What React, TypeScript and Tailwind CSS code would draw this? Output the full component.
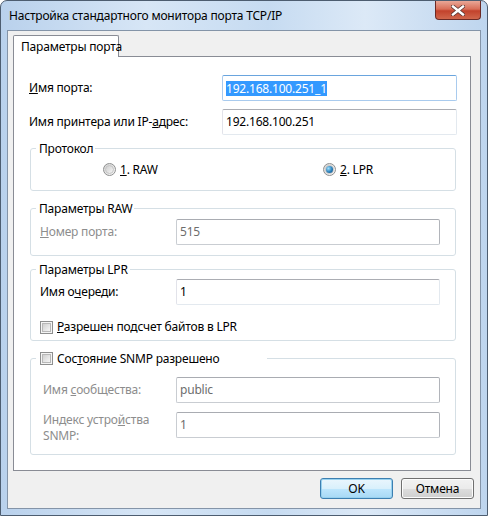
import React from "react";

const font = { fontFamily: '"Noto Sans", "Open Sans", sans-serif', letterSpacing: "-0.2px" };

function Radio({ checked }: { checked?: boolean }) {
  return (
    <span className="relative inline-flex h-[13px] w-[13px] shrink-0 items-center justify-center rounded-full border border-[#8e8f8f] bg-[linear-gradient(135deg,#d4d4d4,#f8f8f8)]">
      <span className="h-[9px] w-[9px] rounded-full bg-[linear-gradient(135deg,#cfcfcf,#f4f4f4)] border border-[#c4c4c4] flex items-center justify-center">
        {checked && (
          <span className="h-[7px] w-[7px] rounded-full bg-[radial-gradient(circle_at_35%_35%,#9fe0ff,#2a7fb8_55%,#0f4e86)]" />
        )}
      </span>
    </span>
  );
}

function Check() {
  return (
    <span className="inline-flex h-[13px] w-[13px] shrink-0 items-center justify-center border border-[#8e8f8f] bg-[#f4f4f4]">
      <span className="h-[9px] w-[9px] border border-[#b8b8b8] bg-[linear-gradient(135deg,#d0d0d0,#f6f6f6)]" />
    </span>
  );
}

function Input({
  value,
  w,
  disabled,
  selected,
  focus,
}: {
  value: string;
  w: string;
  disabled?: boolean;
  selected?: boolean;
  focus?: boolean;
}) {
  return (
    <div
      className={`${w} h-[26px] flex items-center pl-[3px] bg-white rounded-[2px] border ${
        focus
          ? "border-[#a9cbee] border-t-[#6aa5de]"
          : disabled
          ? "border-[#c9cdd2] border-t-[#a9acb2] border-r-[#b1b4ba]"
          : "border-[#e3e9ef] border-t-[#abadb3] border-l-[#e2e3ea]"
      }`}
    >
      {selected ? (
        <span className="bg-[#3399ff] text-white leading-[15px]">{value}</span>
      ) : (
        <span className={disabled ? "text-[#6d6d6d]" : "text-black"}>{value}</span>
      )}
    </div>
  );
}

function Group({
  legend,
  h,
  legendW,
  children,
}: {
  legend: React.ReactNode;
  h: string;
  legendW?: string;
  children: React.ReactNode;
}) {
  return (
    <div className={`relative ml-[16px] mr-[14px] ${h} rounded-[3px] border border-[#d5dfe5]`}>
      <div className={`absolute left-[5px] -top-[9px] h-[17px] flex items-center bg-white pl-[3px] pr-[2px] whitespace-nowrap ${legendW ?? ""}`}>
        {legend}
      </div>
      {children}
    </div>
  );
}

export default function App() {
  return (
    <div
      style={font}
      className="w-[488px] h-[516px] text-[12px] text-black rounded-t-[7px] border border-[#4d5d70] bg-[linear-gradient(90deg,#b9d1ec_0%,#d7e6f6_30%,#c6dbf1_55%,#dce9f7_75%,#bed5ee_100%)] flex flex-col overflow-hidden"
    >
      {/* Title bar */}
      <div className="h-[29px] flex items-start justify-between">
        <div className="pl-[8px] pt-[6px] text-[12px] text-black whitespace-nowrap">
          Настройка стандартного монитора порта TCP/IP
        </div>
        <div className="mr-[6px] h-[19px] w-[46px] rounded-b-[4px] border border-t-0 border-[#6b2a25] bg-[linear-gradient(180deg,#e9a797_0%,#d86e58_45%,#c2422c_55%,#d0674c_100%)] flex items-center justify-center">
          <svg width="14" height="11" viewBox="0 0 14 11">
            <path d="M2 1.5 L12 9.5 M12 1.5 L2 9.5" stroke="#5b3632" strokeWidth="4" strokeLinecap="square" />
            <path d="M2 1.5 L12 9.5 M12 1.5 L2 9.5" stroke="#ffffff" strokeWidth="2.4" strokeLinecap="square" />
          </svg>
        </div>
      </div>

      {/* Client area */}
      <div className="mx-[6px] mb-[6px] flex-1 border border-[#8494a8] bg-[#f0f0f0] flex flex-col">
        <div className="pl-[5px] pt-[4px]">
          {/* Tab header */}
          <div className="relative z-10 w-[106px] h-[22px] bg-white border border-b-0 border-[#898c95] rounded-t-[2px] flex items-center pl-[7px] whitespace-nowrap">
            Параметры порта
          </div>
          {/* Tab panel */}
          <div className="-mt-[1px] w-[458px] h-[415px] bg-white border border-[#898c95] pt-[18px]">
            <div className="flex items-center">
              <div className="pl-[15px] w-[208px] whitespace-nowrap">
                <u>И</u>мя порта:
              </div>
              <Input value="192.168.100.251_1" w="w-[235px]" selected focus />
            </div>
            <div className="flex items-center mt-[8px]">
              <div className="pl-[15px] w-[208px] whitespace-nowrap">
                Имя принтера или IP-<u>а</u>дрес:
              </div>
              <Input value="192.168.100.251" w="w-[235px]" />
            </div>

            <div className="mt-[13px]">
              <Group legend={<span>Протокол</span>} h="h-[43px]">
                <div className="flex items-center h-full">
                  <div className="ml-[72px] w-[220px] flex items-center gap-[4px]">
                    <Radio />
                    <span>
                      <u>1</u>. RAW
                    </span>
                  </div>
                  <div className="flex items-center gap-[4px]">
                    <Radio checked />
                    <span>
                      <u>2</u>. LPR
                    </span>
                  </div>
                </div>
              </Group>
            </div>

            <div className="mt-[17px]">
              <Group legend={<span>Параметры RAW</span>} h="h-[48px]">
                <div className="flex items-center pt-[10px]">
                  <div className="pl-[9px] w-[145px] text-[#8d8d8d] whitespace-nowrap">
                    <u>Н</u>омер порта:
                  </div>
                  <Input value="515" w="w-[264px]" disabled />
                </div>
              </Group>
            </div>

            <div className="mt-[13px]">
              <Group legend={<span>Параметры LPR</span>} h="h-[72px]">
                <div className="flex items-center pt-[9px]">
                  <div className="pl-[9px] w-[145px] whitespace-nowrap">
                    Имя о<u>ч</u>ереди:
                  </div>
                  <Input value="1" w="w-[264px]" />
                </div>
                <div className="flex items-center gap-[4px] pl-[9px] mt-[13px]">
                  <Check />
                  <span className="whitespace-nowrap">
                    <u>Р</u>азрешен подсчет байтов в LPR
                  </span>
                </div>
              </Group>
            </div>

            <div className="mt-[17px]">
              <Group
                legend={
                  <div className="flex items-center gap-[4px] pl-[1px]">
                    <Check />
                    <span>
                      Сос<u>т</u>ояние SNMP разрешено
                    </span>
                  </div>
                }
                legendW="w-[231px]"
                h="h-[97px]"
              >
                <div className="flex items-center pt-[18px]">
                  <div className="pl-[12px] w-[145px] text-[#8d8d8d] whitespace-nowrap">
                    Имя <u>с</u>ообщества:
                  </div>
                  <Input value="public" w="w-[264px]" disabled />
                </div>
                <div className="flex items-start mt-[9px]">
                  <div className="pl-[12px] w-[145px] text-[#8d8d8d] leading-[16px]">
                    <div className="whitespace-nowrap">
                      Индекс устро<u>й</u>ства
                    </div>
                    <div>SNMP:</div>
                  </div>
                  <Input value="1" w="w-[264px]" disabled />
                </div>
              </Group>
            </div>
          </div>
        </div>

        {/* Buttons */}
        <div className="flex justify-end gap-[8px] pr-[6px] mt-[7px]">
          <button className="w-[73px] h-[21px] rounded-[3px] border border-[#3c7fb1] bg-[linear-gradient(180deg,#eaf6fd_0%,#d9f0fc_50%,#bee6fd_51%,#a7d9f5_100%)] shadow-[inset_0_0_0_1px_#98d1ef] text-black">
            OK
          </button>
          <button className="w-[73px] h-[21px] rounded-[3px] border border-[#707070] bg-[linear-gradient(180deg,#f2f2f2_0%,#ebebeb_50%,#dddddd_51%,#cfcfcf_100%)] shadow-[inset_0_0_0_1px_#fcfcfc] text-black">
            Отмена
          </button>
        </div>
      </div>
    </div>
  );
}
